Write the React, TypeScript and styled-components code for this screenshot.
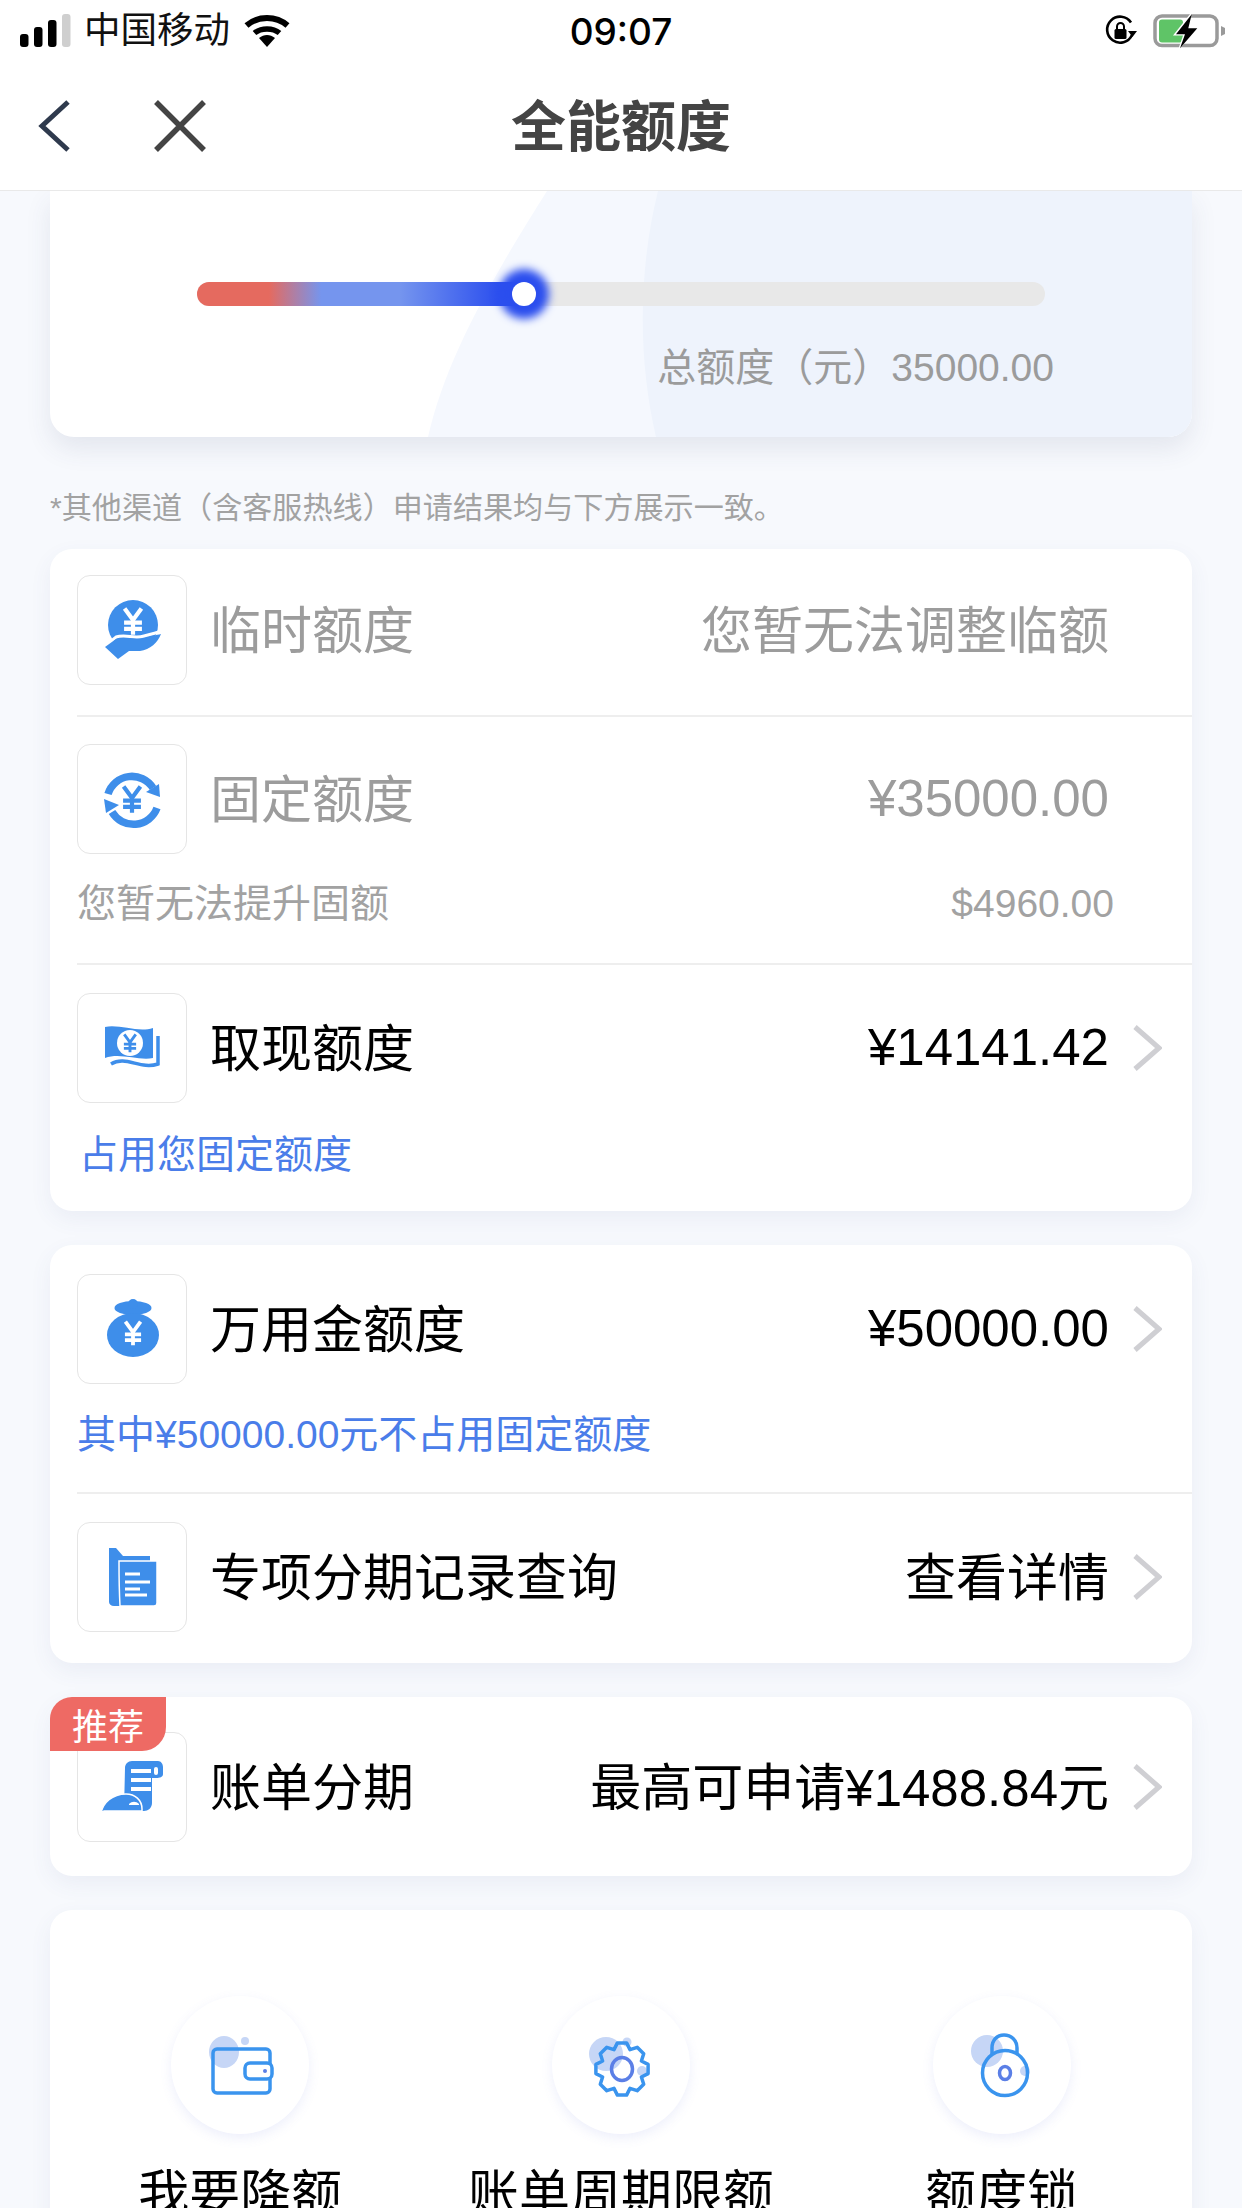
import React from 'react';
import styled, { createGlobalStyle } from 'styled-components';

const BLUE = '#3e8eea';
const RING = '#3a94ee';
const INNER = '#5b7fe6';
const BLOB = '#c6d6f6';

const GlobalStyle = createGlobalStyle`
  html, body {
    margin: 0;
    padding: 0;
    width: 1242px;
    height: 2208px;
    overflow: hidden;
    background: #f7f9fd;
    font-family: "Liberation Sans", "Noto Sans CJK SC", sans-serif;
    color: #000;
  }
  * { box-sizing: border-box; }
`;

const Page = styled.div`
  width: 1242px;
  height: 2208px;
  overflow: hidden;
  background: #f7f9fd;
`;

const Header = styled.header`
  position: relative;
  z-index: 2;
  height: 191px;
  background: #fff;
  border-bottom: 1px solid #e9e9e9;
`;

const StatusBar = styled.div`
  height: 62px;
  display: grid;
  grid-template-columns: 1fr auto 1fr;
  align-items: center;
`;

const StatusLeft = styled.div`
  display: flex;
  align-items: center;
  padding-left: 20px;
`;

const Carrier = styled.span`
  font-size: 36.5px;
  line-height: 44px;
  margin-left: 12px;
  margin-right: 13px;
  color: #111;
`;

const Clock = styled.span`
  font-family: Inter, "Liberation Sans", sans-serif;
  font-size: 37px;
  font-weight: 500;
  color: #000;
`;

const StatusRight = styled.div`
  display: flex;
  align-items: center;
  justify-content: flex-end;
  gap: 12px;
  padding-right: 12px;
`;

const NavBar = styled.div`
  height: 128px;
  display: grid;
  grid-template-columns: 1fr auto 1fr;
  align-items: center;
`;

const NavButtons = styled.div`
  display: flex;
  align-items: center;
  padding-left: 38px;
  gap: 82px;
`;

const NavTitle = styled.h1`
  margin: 0;
  padding-top: 2px;
  font-size: 55px;
  font-weight: 700;
  color: #444;
  line-height: 70px;
`;

const Content = styled.main`
  padding: 0 50px;
`;

const Card = styled.section`
  position: relative;
  background: #fff;
  border-radius: 22px;
  padding-left: 27px;
  margin-bottom: 34px;
  box-shadow: 0 8px 22px rgba(70, 90, 140, 0.07);
`;

const SummaryCard = styled.section`
  position: relative;
  height: 246px;
  background: #fff;
  border-radius: 0 0 24px 24px;
  padding-top: 91px;
  box-shadow: 0 12px 26px rgba(60, 70, 110, 0.1);
  overflow: visible;
`;

const SummaryShape = styled.svg`
  position: absolute;
  left: 0;
  top: 0;
  border-radius: 0 0 24px 24px;
`;

const Track = styled.div`
  position: relative;
  height: 24px;
  margin: 0 147px;
  border-radius: 12px;
  background: #e8e8e8;
`;

const TrackFill = styled.div<{ $percent: number }>`
  width: ${({ $percent }) => $percent}%;
  height: 100%;
  border-radius: 12px 0 0 12px;
  background: linear-gradient(90deg, #e56a5f 0%, #e56a5f 22%, #7595ee 38%, #7595ee 62%, #2d50ee 92%);
`;

const Knob = styled.div<{ $percent: number }>`
  position: absolute;
  top: 0;
  left: ${({ $percent }) => $percent}%;
  width: 24px;
  height: 24px;
  margin-left: -12px;
  border-radius: 50%;
  background: #fff;
  box-shadow: 0 0 9px 13px #2b4eee;
`;

const TotalLine = styled.div`
  position: relative;
  margin-top: 37px;
  padding-right: 138px;
  text-align: right;
  font-size: 39px;
  line-height: 50px;
  color: #9b9b9b;
`;

const Note = styled.p`
  margin: 49px 0 19px;
  font-size: 30.100px;
  line-height: 44px;
  color: #a2a2a2;
`;

const Section = styled.div<{ $top: number; $bottom: number; $divider?: boolean }>`
  padding-top: ${({ $top }) => $top}px;
  padding-bottom: ${({ $bottom }) => $bottom}px;
  border-top: ${({ $divider }) => ($divider ? '2px solid #eeeeee' : 'none')};
`;

const Row = styled.div`
  display: flex;
  align-items: center;
`;

const IconBox = styled.div`
  flex: none;
  width: 110px;
  height: 110px;
  display: flex;
  align-items: center;
  justify-content: center;
  border: 1.5px solid #e5e5e5;
  border-radius: 13px;
  background: #fff;
`;

const RowTitle = styled.span<{ $muted?: boolean }>`
  margin-left: 23px;
  padding-top: 4px;
  font-size: 51px;
  line-height: 66px;
  color: ${({ $muted }) => ($muted ? '#9c9c9c' : '#000')};
`;

const RowValue = styled.span<{ $muted?: boolean; $cjk?: boolean }>`
  margin-left: auto;
  padding-top: ${({ $cjk }) => ($cjk ? 4 : 0)}px;
  font-size: 51px;
  line-height: 66px;
  color: ${({ $muted }) => ($muted ? '#9c9c9c' : '#000')};
`;

const ArrowSlot = styled.div`
  flex: none;
  width: 83px;
  padding-left: 23px;
  display: flex;
  align-items: center;
`;

const SubRow = styled.div<{ $top: number }>`
  display: flex;
  justify-content: space-between;
  margin-top: ${({ $top }) => $top}px;
  padding-right: 78px;
  font-size: 39px;
  line-height: 44px;
  color: #a2a2a2;
`;

const BlueText = styled.div<{ $top: number; $shift?: number }>`
  margin-top: ${({ $top }) => $top}px;
  margin-left: ${({ $shift }) => $shift ?? 0}px;
  font-size: 39px;
  line-height: 44px;
  color: #4a7de9;
`;

const Badge = styled.div`
  position: absolute;
  left: 0;
  top: 0;
  width: 116px;
  height: 54px;
  display: flex;
  align-items: center;
  justify-content: center;
  border-radius: 22px 0 24px 0;
  background: #ee6a64;
  color: #fff;
  font-size: 36px;
`;

const ToolsCard = styled.section`
  background: #fff;
  border-radius: 22px;
  padding-top: 86px;
  padding-bottom: 60px;
  display: grid;
  grid-template-columns: repeat(3, 1fr);
  box-shadow: 0 8px 22px rgba(70, 90, 140, 0.07);
`;

const Tool = styled.div`
  display: flex;
  flex-direction: column;
  align-items: center;
`;

const ToolCircle = styled.div`
  width: 138px;
  height: 138px;
  border-radius: 50%;
  background: #fff;
  box-shadow: 0 4px 12px rgba(110, 120, 220, 0.12);
`;

const ToolLabel = styled.span`
  margin-top: 28px;
  font-size: 51px;
  line-height: 66px;
  white-space: nowrap;
`;

const Yen = ({ x, y, s = 1, color = '#fff' }: { x: number; y: number; s?: number; color?: string }) => (
  <g transform={`translate(${x} ${y}) scale(${s})`} stroke={color} strokeWidth={4} fill="none">
    <path d="M-8 -12 L0 -1 L8 -12" />
    <path d="M0 -2 V13 M-8.5 1.5 H8.5 M-8.5 7.5 H8.5" />
  </g>
);

const SignalIcon = () => (
  <svg width="52" height="34" viewBox="0 0 52 34">
    <rect x="0" y="20" width="8.5" height="13" rx="3" fill="#000" />
    <rect x="14" y="13" width="8.5" height="20" rx="3" fill="#000" />
    <rect x="28" y="6" width="8.5" height="27" rx="3" fill="#000" />
    <rect x="42" y="0" width="8.5" height="33" rx="3" fill="#cfcfcf" />
  </svg>
);

const WifiIcon = () => (
  <svg width="48" height="36" viewBox="0 0 48 36">
    <path d="M3.5 12.5 C15 2.5 33 2.5 44.5 12.5" stroke="#000" strokeWidth="6" fill="none" />
    <path d="M11.5 20 C18 14.5 30 14.5 36.5 20" stroke="#000" strokeWidth="5.5" fill="none" />
    <path d="M16 25 C21 21 27 21 32 25 L24 34 Z" fill="#000" />
  </svg>
);

const RotationLockIcon = () => (
  <svg width="34" height="34" viewBox="0 0 34 34">
    <path d="M28 21 A13 13 0 1 1 27 8.5" stroke="#000" strokeWidth="2.6" fill="none" />
    <path d="M24 17 H33 L28.500 23 Z" fill="#000" />
    <rect x="10.500" y="15" width="12" height="10" rx="1.500" fill="#000" />
    <path d="M13 15 V12.500 A3.500 3.500 0 0 1 20 12.500 V15" stroke="#000" strokeWidth="2" fill="none" />
  </svg>
);

const BatteryIcon = () => (
  <svg width="80" height="40" viewBox="0 0 80 40">
    <rect x="5" y="5" width="62" height="29.500" rx="7" stroke="#9a9a9a" strokeWidth="3.500" fill="none" />
    <rect x="9" y="8.500" width="24" height="23" rx="3" fill="#5fc467" />
    <path d="M71 15 L75 17 V23 L71 25 Z" fill="#9a9a9a" />
    <path d="M41.700 1 L23 24.500 H33 L28 39 L50 16.500 H39 Z" fill="#fff" />
    <path d="M41.700 3.300 L26 23.300 H35 L30 37.300 L47.300 17.300 H38.300 Z" fill="#000" />
  </svg>
);

const BackIcon = () => (
  <svg width="34" height="52" viewBox="0 0 34 52">
    <path d="M30 2 L4 26 L30 50" stroke="#2f3a4d" strokeWidth="5" fill="none" />
  </svg>
);

const CloseIcon = () => (
  <svg width="52" height="52" viewBox="0 0 52 52">
    <path d="M2 2 L50 50 M50 2 L2 50" stroke="#444" strokeWidth="5.500" fill="none" />
  </svg>
);

const ArrowIcon = () => (
  <svg width="30" height="46" viewBox="0 0 30 46">
    <path d="M3 2 L27 23 L3 44" stroke="#cfcfd3" strokeWidth="5" fill="none" />
  </svg>
);

const HandIcon = () => (
  <svg width="90" height="90" viewBox="-3 -5 90 90">
    <circle cx="43" cy="35" r="25" fill={BLUE} />
    <Yen x={43} y={31} s={1.05} />
    <path d="M15 56 L26 47 C36 44 44 49 54 46 C62 44 66 43 72 41" stroke="#fff" strokeWidth="3" fill="none" />
    <path d="M15 57 L26 49 C36 46 44 51 55 48 C62 46 66 45 71 44 C68 52 60 60 50 61 L39 61 L28 69 Z" fill={BLUE} />
  </svg>
);

const ExchangeIcon = () => (
  <svg width="90" height="90" viewBox="-3 -6 90 90">
    <path d="M18 34 A25 25 0 0 1 63 28" stroke={BLUE} strokeWidth="7.500" fill="none" />
    <path d="M70 37 L56 32 L69 24 Z" fill={BLUE} />
    <path d="M67 48 A25 25 0 0 1 22 52" stroke={BLUE} strokeWidth="7.500" fill="none" />
    <path d="M14 39 L29 45 L16 53 Z" fill={BLUE} />
    <Yen x={42} y={39} s={1.05} color={BLUE} />
  </svg>
);

const BanknoteIcon = () => (
  <svg width="90" height="90" viewBox="-3 -2 90 90">
    <path d="M15 22 C30 19 48 28 63 23 V53 C48 56 30 47 15 53 Z" fill={BLUE} />
    <circle cx="40" cy="38" r="13" fill="#fff" />
    <Yen x={40} y={38} s={0.72} color={BLUE} />
    <path d="M21 59 C36 50 50 65 68 59 V31" stroke={BLUE} strokeWidth="3.500" fill="none" />
  </svg>
);

const MoneyBagIcon = () => (
  <svg width="90" height="90" viewBox="-3 -5 90 90">
    <ellipse cx="43" cy="19" rx="18.500" ry="7" fill={BLUE} />
    <circle cx="43" cy="15" r="5" fill={BLUE} />
    <ellipse cx="43" cy="46" rx="26" ry="22" fill={BLUE} />
    <Yen x={43} y={44} s={0.95} />
  </svg>
);

const FolderIcon = () => (
  <svg width="90" height="90" viewBox="-3 -5 90 90">
    <path d="M19 11 H26 L33 19 H60 V69 H24 C21 69 19 67 19 65 Z" fill={BLUE} />
    <path d="M30 69 C29 50 29 34 29 24 H67 V66 C67 68 66 69 64 69 Z" fill={BLUE} stroke="#fff" strokeWidth="1.500" />
    <path d="M35 37 H50 M35 45 H60 M35 52 H50 M35 58 H57" stroke="#fff" strokeWidth="3" fill="none" />
  </svg>
);

const ReceiptIcon = () => (
  <svg width="90" height="90" viewBox="-3 -3 90 90">
    <path d="M35 23 C35 19 38 16 42 16 H68 C71 16 73 19 73 22 V29 C73 32 70 33 66 33 H62 V58 C62 63 58 66 54 66 H34 Z" fill={BLUE} />
    <path d="M41 26 H61 M41 35 H61 M41 44 H61" stroke="#fff" strokeWidth="4" fill="none" />
    <rect x="64" y="22" width="4" height="8" rx="2" fill="#fff" />
    <path d="M11 68 C13 58 22 49 36 49 C45 49 52 55 52 64 V66 H14 Z" fill={BLUE} stroke="#fff" strokeWidth="1.500" />
    <path d="M39 59 C42 56 46 56 49 59 V60 H39 Z" fill="#fff" />
  </svg>
);

const WalletIcon = () => (
  <svg width="138" height="138" viewBox="0 0 138 138">
    <ellipse cx="53" cy="56" rx="15" ry="16" fill={BLOB} />
    <circle cx="74" cy="45" r="4" fill={BLOB} />
    <rect x="42" y="53" width="57" height="44" rx="4" stroke={RING} strokeWidth="3.500" fill="none" />
    <rect x="74" y="67" width="27" height="16" rx="5" fill="#fff" stroke={RING} strokeWidth="3.500" />
    <circle cx="94" cy="75" r="2" fill={INNER} />
  </svg>
);

const gearPath = (() => {
  const teeth = 8;
  const points: string[] = [];
  for (let i = 0; i < teeth; i++) {
    const base = (i / teeth) * Math.PI * 2;
    const step = (Math.PI * 2) / teeth;
    [
      [21, -0.5],
      [26.5, -0.22],
      [26.5, 0.22],
      [21, 0.5],
    ].forEach(([r, f]) => {
      const a = base + f * step;
      points.push(`${(70 + r * Math.sin(a)).toFixed(1)} ${(73 - r * Math.cos(a)).toFixed(1)}`);
    });
  }
  return `M${points.join(' L')} Z`;
})();

const GearIcon = () => (
  <svg width="138" height="138" viewBox="0 0 138 138">
    <circle cx="54" cy="58" r="17" fill={BLOB} />
    <circle cx="75" cy="46" r="4.500" fill={BLOB} />
    <circle cx="90" cy="75" r="5" fill={BLOB} />
    <path d={gearPath} stroke={RING} strokeWidth="3.500" strokeLinejoin="round" fill="none" />
    <ellipse cx="70" cy="73" rx="10.500" ry="11.500" stroke={INNER} strokeWidth="3.500" fill="none" />
  </svg>
);

const LockIcon = () => (
  <svg width="138" height="138" viewBox="0 0 138 138">
    <circle cx="54" cy="55" r="16" fill={BLOB} />
    <circle cx="92" cy="75" r="5" fill={BLOB} />
    <path d="M59 58 V52 C59 44 64 39 71 39 C78 39 84 44 84 52 V58" stroke={RING} strokeWidth="3.500" fill="none" />
    <circle cx="72" cy="77" r="22.500" fill="none" stroke={RING} strokeWidth="3.500" />
    <ellipse cx="72" cy="77" rx="5.500" ry="6.500" stroke={INNER} strokeWidth="3.500" fill="none" />
  </svg>
);

const App = () => {
  const used = (327 / 848) * 100;

  return (
    <Page>
      <GlobalStyle />
      <Header>
        <StatusBar>
          <StatusLeft>
            <SignalIcon />
            <Carrier>中国移动</Carrier>
            <WifiIcon />
          </StatusLeft>
          <Clock>09:07</Clock>
          <StatusRight>
            <RotationLockIcon />
            <BatteryIcon />
          </StatusRight>
        </StatusBar>
        <NavBar>
          <NavButtons>
            <BackIcon />
            <CloseIcon />
          </NavButtons>
          <NavTitle>全能额度</NavTitle>
        </NavBar>
      </Header>

      <Content>
        <SummaryCard>
          <SummaryShape width="1142" height="246" viewBox="0 0 1142 246">
            <path d="M497 0 C440 90 395 170 378 246 H1142 V0 Z" fill="#f5f8fe" />
            <path d="M608 0 C588 80 588 170 606 246 H1118 C1132 246 1142 236 1142 222 V0 Z" fill="#eef3fc" />
          </SummaryShape>
          <Track>
            <TrackFill $percent={used} />
            <Knob $percent={used} />
          </Track>
          <TotalLine>总额度（元）35000.00</TotalLine>
        </SummaryCard>

        <Note>*其他渠道（含客服热线）申请结果均与下方展示一致。</Note>

        <Card>
          <Section $top={26} $bottom={30}>
            <Row>
              <IconBox><HandIcon /></IconBox>
              <RowTitle $muted>临时额度</RowTitle>
              <RowValue $muted $cjk>您暂无法调整临额</RowValue>
              <ArrowSlot />
            </Row>
          </Section>
          <Section $divider $top={27} $bottom={37}>
            <Row>
              <IconBox><ExchangeIcon /></IconBox>
              <RowTitle $muted>固定额度</RowTitle>
              <RowValue $muted>¥35000.00</RowValue>
              <ArrowSlot />
            </Row>
            <SubRow $top={28}>
              <span>您暂无法提升固额</span>
              <span>$4960.00</span>
            </SubRow>
          </Section>
          <Section $divider $top={28} $bottom={34}>
            <Row>
              <IconBox><BanknoteIcon /></IconBox>
              <RowTitle>取现额度</RowTitle>
              <RowValue>¥14141.42</RowValue>
              <ArrowSlot><ArrowIcon /></ArrowSlot>
            </Row>
            <BlueText $top={30} $shift={2}>占用您固定额度</BlueText>
          </Section>
        </Card>

        <Card>
          <Section $top={29} $bottom={35}>
            <Row>
              <IconBox><MoneyBagIcon /></IconBox>
              <RowTitle>万用金额度</RowTitle>
              <RowValue>¥50000.00</RowValue>
              <ArrowSlot><ArrowIcon /></ArrowSlot>
            </Row>
            <BlueText $top={29}>其中¥50000.00元不占用固定额度</BlueText>
          </Section>
          <Section $divider $top={28} $bottom={31}>
            <Row>
              <IconBox><FolderIcon /></IconBox>
              <RowTitle>专项分期记录查询</RowTitle>
              <RowValue $cjk>查看详情</RowValue>
              <ArrowSlot><ArrowIcon /></ArrowSlot>
            </Row>
          </Section>
        </Card>

        <Card>
          <Badge>推荐</Badge>
          <Section $top={35} $bottom={34}>
            <Row>
              <IconBox><ReceiptIcon /></IconBox>
              <RowTitle>账单分期</RowTitle>
              <RowValue $cjk>最高可申请¥1488.84元</RowValue>
              <ArrowSlot><ArrowIcon /></ArrowSlot>
            </Row>
          </Section>
        </Card>

        <ToolsCard>
          <Tool>
            <ToolCircle><WalletIcon /></ToolCircle>
            <ToolLabel>我要降额</ToolLabel>
          </Tool>
          <Tool>
            <ToolCircle><GearIcon /></ToolCircle>
            <ToolLabel>账单周期限额</ToolLabel>
          </Tool>
          <Tool>
            <ToolCircle><LockIcon /></ToolCircle>
            <ToolLabel>额度锁</ToolLabel>
          </Tool>
        </ToolsCard>
      </Content>
    </Page>
  );
};

export default App;
